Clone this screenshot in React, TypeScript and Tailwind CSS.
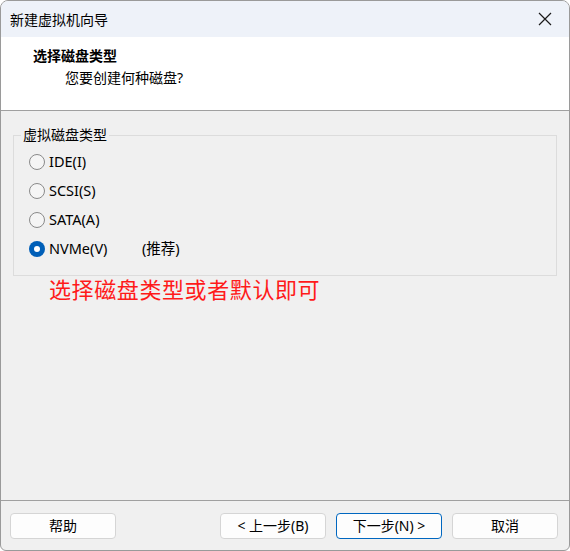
import { useState } from 'react'

const font = { fontFamily: '"Noto Sans", "Noto Sans CJK SC", sans-serif' }

const options = [
  { id: 'ide', label: 'IDE(I)' },
  { id: 'scsi', label: 'SCSI(S)' },
  { id: 'sata', label: 'SATA(A)' },
  { id: 'nvme', label: 'NVMe(V)', note: '(推荐)' },
]

function Radio({ checked }: { checked: boolean }) {
  if (checked) {
    return (
      <span className="flex h-[16px] w-[16px] items-center justify-center rounded-full bg-[#005fb8]">
        <span className="h-[6px] w-[6px] rounded-full bg-white" />
      </span>
    )
  }
  return <span className="h-[16px] w-[16px] rounded-full border border-[#8a8a8a] bg-[#f5f5f5]" />
}

function Button({ children, primary }: { children: React.ReactNode; primary?: boolean }) {
  return (
    <button
      type="button"
      className={
        primary
          ? 'h-[26px] w-[106px] rounded-[4px] border border-[#0067c0] bg-[#fdfdfd] text-[14px] text-black'
          : 'h-[26px] w-[106px] rounded-[4px] border border-[#d5d5d5] bg-[#fdfdfd] text-[14px] text-black'
      }
    >
      {children}
    </button>
  )
}

export default function App() {
  const [value, setValue] = useState('nvme')

  return (
    <div
      style={font}
      className="flex h-[551px] w-[570px] flex-col overflow-hidden rounded-t-[8px] rounded-b-[6px] border border-[#9a9a9a] bg-[#f0f0f0] text-black"
    >
      {/* title bar */}
      <div className="flex h-[36px] shrink-0 items-center justify-between bg-[#eef2f9] pl-[9px] pr-[16px]">
        <span className="text-[14px]">新建虚拟机向导</span>
        <svg width="16" height="16" viewBox="0 0 16 16" className="text-[#1a1a1a]">
          <path d="M2 2L14 14M14 2L2 14" stroke="currentColor" strokeWidth="1.2" />
        </svg>
      </div>

      {/* header */}
      <div className="h-[74px] shrink-0 border-b border-[#a0a0a0] bg-white pl-[32px] pt-[8px]">
        <p className="text-[14px] leading-[22px] font-bold">选择磁盘类型</p>
        <p className="pl-[32px] text-[14px] leading-[22px]">您要创建何种磁盘?</p>
      </div>

      {/* body */}
      <div className="flex-1 px-[12px] pt-[14px]">
        <fieldset className="h-[151px] border border-[#dcdcdc]">
          <legend className="ml-[7px] px-[2px] text-[14px] leading-[20px]">虚拟磁盘类型</legend>
          <div className="flex flex-col pl-[15px] pt-[2px]">
            {options.map((o) => (
              <label
                key={o.id}
                onClick={() => setValue(o.id)}
                className="flex h-[29px] cursor-default items-center gap-[4px] text-[14.5px]"
              >
                <Radio checked={value === o.id} />
                <span className="w-[89px]">{o.label}</span>
                {o.note ? <span>{o.note}</span> : null}
              </label>
            ))}
          </div>
        </fieldset>
        <p
          style={{ fontFamily: '"Noto Sans CJK SC", sans-serif' }}
          className="pl-[36px] text-[22px] leading-[25px] tracking-[0.6px] text-[#ff1a1a]"
        >
          选择磁盘类型或者默认即可
        </p>
      </div>

      {/* footer */}
      <div className="flex h-[50px] shrink-0 items-center justify-between border-t border-[#a0a0a0] pl-[9px] pr-[11px]">
        <Button>帮助</Button>
        <div className="flex gap-[10px]">
          <Button>&lt; 上一步(B)</Button>
          <Button primary>下一步(N) &gt;</Button>
          <Button>取消</Button>
        </div>
      </div>
    </div>
  )
}
